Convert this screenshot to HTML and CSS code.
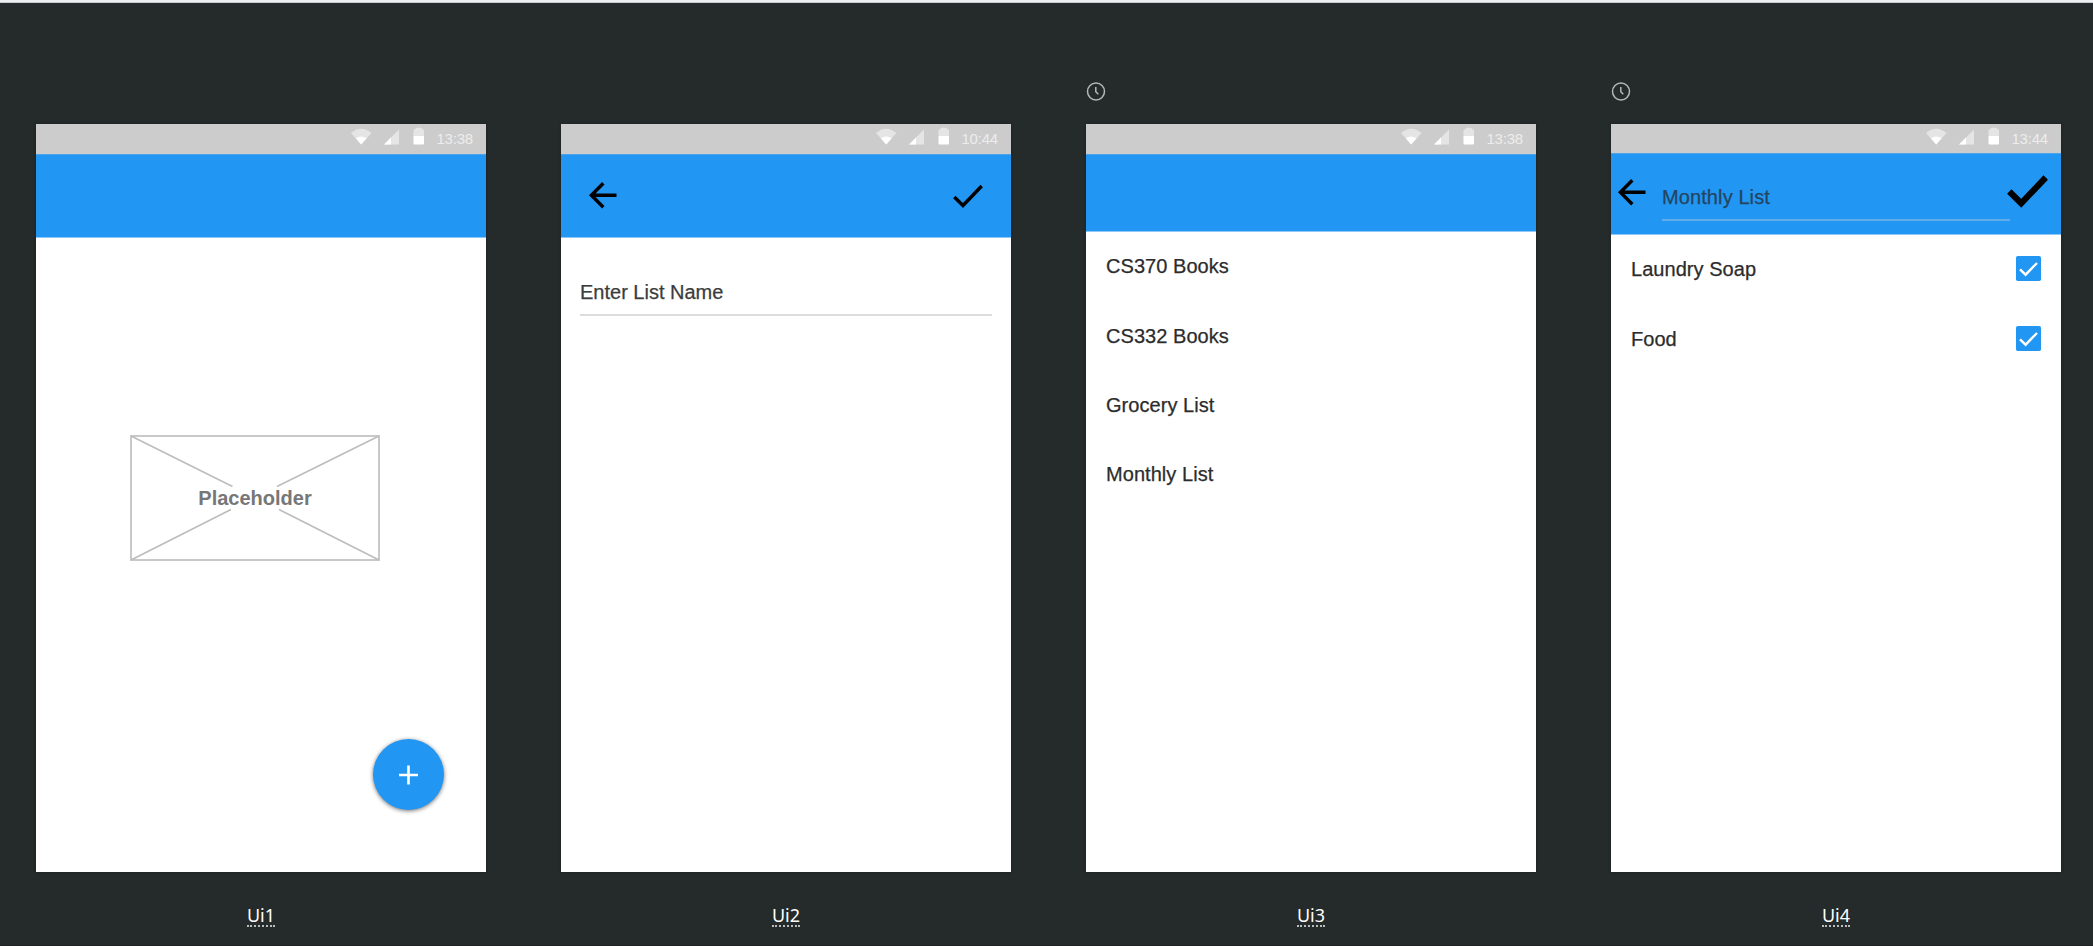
FILE: index.html
```html
<!DOCTYPE html>
<html lang="en">
<head>
<meta charset="utf-8">
<title>Screens</title>
<link rel="stylesheet" href="styles.css">
</head>
<body>
<svg width="0" height="0" class="defs" aria-hidden="true">
  <defs>
    <symbol id="status" viewBox="0 0 74 20">
      <path d="M0 7Q10-1.500 20.500 7L10.200 18.500Z" fill="#e5e5e5"/>
      <path d="M4.800 12.300Q10.200 8.500 15.600 12.300L10.200 18.500Z" fill="#fff"/>
      <path d="M48 3.500V18.500H33Z" fill="#e5e5e5"/>
      <path d="M40 11.500V18.500H33Z" fill="#fff"/>
      <path d="M62.500 5Q62.500 3.500 64 3.200Q64.500 1.500 67.700 1.500Q71 1.500 71.500 3.200Q73 3.500 73 5V11H62.500Z" fill="#e5e5e5"/>
      <path d="M62.500 10H73V17.500Q73 18.500 72 18.500H63.500Q62.500 18.500 62.500 17.500Z" fill="#fff"/>
    </symbol>
    <symbol id="back" viewBox="0 0 28 28">
      <path d="M14.300 2.200L2.400 14.200L14.300 26.200M2 14.200H27.500" fill="none" stroke="#000" stroke-width="3.400"/>
    </symbol>
    <symbol id="clock" viewBox="0 0 20 20">
      <circle cx="10" cy="10.500" r="8.500" fill="none" stroke="#b4b7b7" stroke-width="1.500"/>
      <path d="M9.800 6V10.800L12.300 13.300" fill="none" stroke="#b4b7b7" stroke-width="1.500"/>
    </symbol>
    <symbol id="box" viewBox="0 0 25 25">
      <rect width="25" height="25" rx="1.800" fill="#2196f3"/>
      <path d="M4 13.300L9.600 18.700L21 7" fill="none" stroke="#fff" stroke-width="2.400"/>
    </symbol>
  </defs>
</svg>
<main class="board">
  <section class="frame">
    <div class="marker"></div>
    <div class="screen">
      <div class="status"><svg class="status-icons"><use href="#status"/></svg><span class="time">13:38</span></div>
      <div class="appbar"></div>
      <div class="content empty">
        <svg class="placeholder" viewBox="0 0 250 126">
          <rect x="1" y="1" width="248" height="124" fill="none" stroke="#c4c4c4" stroke-width="1.800"/>
          <path d="M1 1L102.500 51.500M249 1L147 51.500M1 125L101 74.500M249 125L149 74.500" stroke="#bdbdbd" stroke-width="1.700"/>
          <text x="125" y="70" text-anchor="middle" class="placeholder-text">Placeholder</text>
        </svg>
        <div class="fab"><svg class="plus" viewBox="0 0 20 20"><path d="M9.500 .5V19.500M0 10H19" stroke="#fff" stroke-width="2.600"/></svg></div>
      </div>
    </div>
    <div class="caption"><span class="name">Ui1</span></div>
  </section>
  <section class="frame">
    <div class="marker"></div>
    <div class="screen">
      <div class="status"><svg class="status-icons"><use href="#status"/></svg><span class="time">10:44</span></div>
      <div class="appbar actions">
        <svg class="back"><use href="#back"/></svg>
        <svg class="check" viewBox="0 0 30 24"><path d="M1.300 13L10 21.500L28.700 2" fill="none" stroke="#000" stroke-width="3.400"/></svg>
      </div>
      <div class="content form"><div class="field">Enter List Name</div></div>
    </div>
    <div class="caption"><span class="name">Ui2</span></div>
  </section>
  <section class="frame">
    <div class="marker"><svg class="clock"><use href="#clock"/></svg></div>
    <div class="screen">
      <div class="status"><svg class="status-icons"><use href="#status"/></svg><span class="time">13:38</span></div>
      <div class="appbar medium"></div>
      <div class="content list">
        <div class="row">CS370 Books</div>
        <div class="row">CS332 Books</div>
        <div class="row">Grocery List</div>
        <div class="row">Monthly List</div>
      </div>
    </div>
    <div class="caption"><span class="name">Ui3</span></div>
  </section>
  <section class="frame">
    <div class="marker"><svg class="clock"><use href="#clock"/></svg></div>
    <div class="screen">
      <div class="status short"><svg class="status-icons"><use href="#status"/></svg><span class="time">13:44</span></div>
      <div class="appbar editing">
        <svg class="back"><use href="#back"/></svg>
        <div class="title">Monthly List</div>
        <svg class="check-bold" viewBox="0 0 41 33"><path d="M2.300 16.500L14.200 28.300L38.700 2.500" fill="none" stroke="#000" stroke-width="6.200"/></svg>
      </div>
      <div class="content list checks">
        <div class="row">Laundry Soap<svg class="box"><use href="#box"/></svg></div>
        <div class="row">Food<svg class="box"><use href="#box"/></svg></div>
      </div>
    </div>
    <div class="caption"><span class="name">Ui4</span></div>
  </section>
</main>
</body>
</html>
```
FILE: styles.css
```css
* { box-sizing: border-box; }
body {
  margin: 0;
  height: 946px;
  overflow: hidden;
  background: #252b2b;
  border-top: 2px solid #eceef2;
  border-bottom: 1px solid #1f2324;
  font-family: "Liberation Sans", Arial, sans-serif;
}
svg { display: block; flex: none; }
.defs { position: absolute; }
.board {
  display: flex;
  gap: 75px;
  height: 943px;
  padding-left: 36px;
  border-top: 1px solid #c9cbcd;
}
.frame { width: 450px; flex: none; }
.marker { height: 121px; padding-top: 78px; }
.clock { width: 20px; height: 20px; }
.screen {
  display: flex;
  flex-direction: column;
  height: 748px;
  background: #fff;
  box-shadow: 0 0 3px rgba(0, 0, 0, .3);
}
.status {
  display: flex;
  justify-content: flex-end;
  height: 30px;
  padding: 2px 13px 0 0;
  background: #ccc;
}
.status.short { height: 29px; }
.status-icons { width: 74px; height: 20px; }
.time {
  width: 48px;
  padding-top: 3px;
  font-size: 15px;
  line-height: 19px;
  letter-spacing: -.2px;
  text-align: right;
  color: #ececec;
}
.appbar {
  height: 84px;
  flex: none;
  background: #2196f3;
  border-top: 1px solid #4ba4ea;
  border-bottom: 1px solid #8fc8f6;
}
.appbar.medium { height: 78px; }
.content { flex: 1; }
.back { width: 28px; height: 28px; }
.actions {
  display: flex;
  justify-content: space-between;
  padding: 26px 28px 0 28px;
}
.check { width: 30px; height: 24px; margin-top: 3px; }
.empty {
  display: flex;
  flex-direction: column;
  align-items: flex-end;
  padding: 197px 42px 0 0;
}
.placeholder { width: 250px; height: 126px; margin-right: 64px; }
.placeholder-text { font: bold 20px "Liberation Sans", Arial, sans-serif; fill: #777; }
.fab {
  display: flex;
  align-items: center;
  justify-content: center;
  width: 71px;
  height: 71px;
  margin-top: 178px;
  border-radius: 50%;
  background: #2196f3;
  box-shadow: 0 1px 4px rgba(0, 0, 0, .55);
}
.plus { width: 20px; height: 20px; }
.form { padding: 40px 19px 0; }
.field {
  height: 38px;
  border-bottom: 2px solid #dcdcdc;
  font-size: 20px;
  line-height: 28px;
  color: #3c3c3c;
  -webkit-text-stroke: .25px #3c3c3c;
}
.row {
  display: flex;
  justify-content: space-between;
  align-items: center;
  height: 69.400px;
  padding: 0 20px 1px;
  font-size: 20px;
  line-height: 24px;
  letter-spacing: .05px;
  color: #2c2c2c;
  -webkit-text-stroke: .25px #2c2c2c;
}
.box { width: 25px; height: 25px; margin-top: -1px; }
.appbar.editing { display: flex; height: 82px; padding: 24px 13px 0 7px; }
.title {
  width: 348px;
  height: 43px;
  margin-left: 16px;
  border-bottom: 2px solid #63acea;
  font-size: 20px;
  line-height: 38px;
  letter-spacing: .1px;
  color: #24455f;
  -webkit-text-stroke: .25px #24455f;
}
.check-bold { width: 41px; height: 33px; margin: -3px 0 0 -3px; }
.caption { padding-top: 32px; text-align: center; line-height: 22px; }
.name {
  display: inline-block;
  height: 23px;
  border-bottom: 2px dotted #b9bdbd;
  font: 18px/22px "Noto Sans", sans-serif;
  color: #fff;
}
```
